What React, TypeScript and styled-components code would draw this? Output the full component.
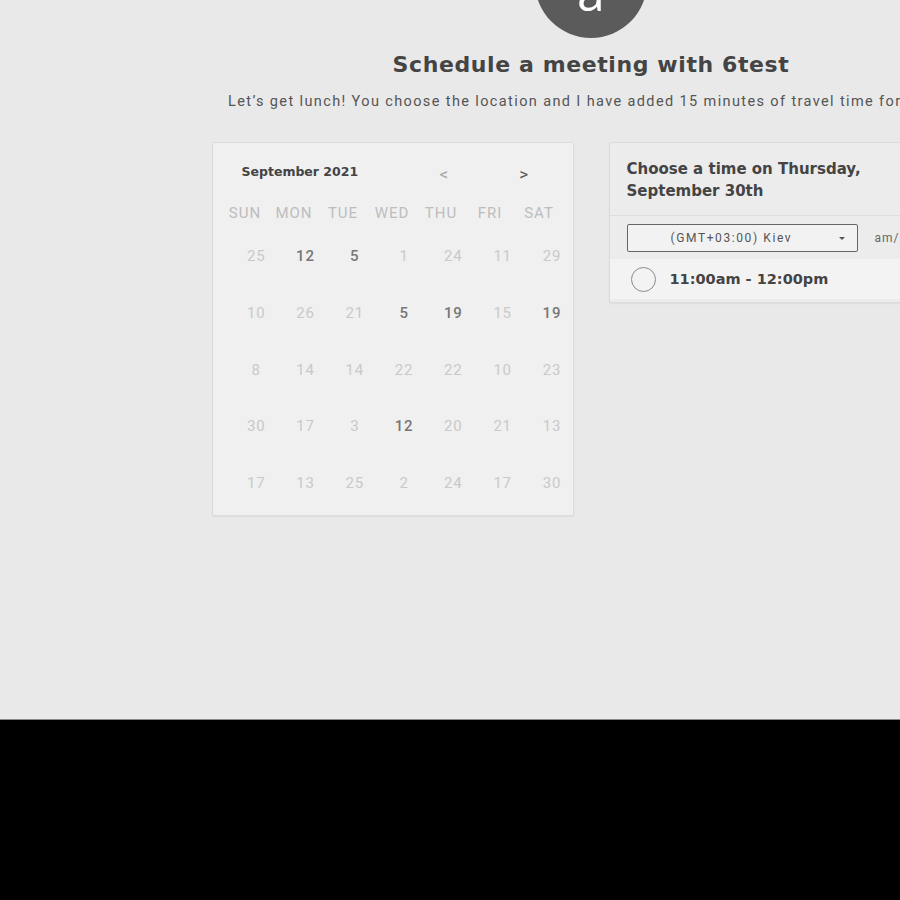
import React from "react";
import styled, { createGlobalStyle } from "styled-components";

const Global = createGlobalStyle`
  html, body { margin: 0; padding: 0; background: #000; overflow: hidden; }
  body { width: 900px; height: 900px; }
  #root { width: 900px; overflow: hidden; }
`;

const bold = `"DejaVu Sans", "Open Sans", sans-serif`;

const Page = styled.div`
  width: 1182px;
  height: 719px;
  background: #e9e9e9;
  border-bottom: 1px solid #8a8a8a;
  display: flex;
  flex-direction: column;
  align-items: center;
  font-family: Roboto, "Liberation Sans", sans-serif;
  overflow: hidden;
`;

const Avatar = styled.div`
  width: 112px;
  height: 112px;
  border-radius: 50%;
  background: #5b5b5b;
  margin-top: -74px;
  display: flex;
  align-items: flex-end;
  justify-content: center;
  color: #fff;
  font-size: 50px;
  line-height: 1;
  box-sizing: border-box;
  padding-bottom: 21px;
  font-family: "Open Sans", sans-serif;
`;

const Title = styled.h1`
  margin: 13px 0 0;
  font-family: ${bold};
  font-weight: 700;
  font-size: 22px;
  letter-spacing: 0.6px;
  line-height: 28px;
  color: #444;
`;

const Subtitle = styled.p`
  margin: 13px 0 0;
  font-size: 14.5px;
  line-height: 20px;
  color: #555;
  letter-spacing: 1.38px;
  white-space: nowrap;
`;

const Panels = styled.div`
  display: flex;
  gap: 35px;
  margin-top: 30px;
  align-items: flex-start;
`;

const Card = styled.div`
  width: 362px;
  box-sizing: border-box;
  background: #f0f0f0;
  border: 1px solid #dcdcdc;
  border-radius: 2px;
  box-shadow: 0 1px 2px rgba(0, 0, 0, 0.06);
  padding-bottom: 23px;
`;

const CalHeader = styled.div`
  display: flex;
  align-items: center;
  padding: 20px 0 0 29px;
  height: 16px;
`;

const Month = styled.div`
  flex: 0 0 198px;
  font-family: ${bold};
  font-weight: 700;
  font-size: 12.5px;
  color: #444;
`;

const NavGroup = styled.div`
  display: flex;
  gap: 71px;
  margin-top: 6px;
`;

const Nav = styled.span<{ $dark?: boolean }>`
  font-size: 17px;
  color: ${(p) => (p.$dark ? "#555" : "#aaa")};
`;

const DowGrid = styled.div`
  display: grid;
  grid-template-columns: repeat(7, 49px);
  padding-left: 8px;
  margin-top: 24px;
`;

const Dow = styled.div`
  text-align: center;
  font-size: 15px;
  letter-spacing: 1px;
  color: #bdbdbd;
  height: 20px;
  line-height: 20px;
`;

const DayGrid = styled.div`
  display: grid;
  grid-template-columns: repeat(7, 49.3px);
  row-gap: 38.8px;
  padding-left: 19px;
  margin-top: 24px;
`;

const Day = styled.div<{ $active?: boolean }>`
  text-align: center;
  font-size: 15px;
  letter-spacing: 0.8px;
  height: 18px;
  line-height: 18px;
  color: ${(p) => (p.$active ? "#777" : "#c9c9c9")};
  font-weight: ${(p) => (p.$active ? 500 : 400)};
`;

const TimePanel = styled.div`
  width: 362px;
  box-sizing: border-box;
  background: #ececec;
  border: 1px solid #dcdcdc;
  border-radius: 2px;
  box-shadow: 0 1px 2px rgba(0, 0, 0, 0.06);
  padding-bottom: 3px;
`;

const TimeHeader = styled.div`
  padding: 15px 17px 13px;
  border-bottom: 1px solid #dedede;
  font-family: ${bold};
  font-weight: 700;
  font-size: 15px;
  line-height: 22px;
  color: #444;
`;

const ZoneRow = styled.div`
  display: flex;
  align-items: center;
  padding: 8px 17px 7px;
  gap: 17px;
`;

const Select = styled.div`
  width: 231px;
  height: 28px;
  box-sizing: border-box;
  border: 1px solid #666;
  border-radius: 2px;
  background: #f2f2f2;
  display: flex;
  align-items: center;
  font-size: 12px;
  letter-spacing: 1.6px;
  color: #555;
  padding: 0 12px 0 43px;
`;

const SelectText = styled.span`
  flex: 1;
`;

const Caret = styled.span`
  width: 0;
  height: 0;
  border-left: 3px solid transparent;
  border-right: 3px solid transparent;
  border-top: 3px solid #555;
`;

const Format = styled.span`
  font-size: 12px;
  letter-spacing: 1px;
  color: #666;
`;

const Slot = styled.div`
  display: flex;
  align-items: center;
  gap: 14px;
  height: 40px;
  padding: 0 21px;
  background: #f3f3f3;
`;

const Radio = styled.span`
  width: 25px;
  height: 25px;
  box-sizing: border-box;
  border: 1.5px solid #8a8a8a;
  border-radius: 50%;
`;

const SlotText = styled.span`
  font-family: ${bold};
  font-weight: 700;
  font-size: 14.5px;
  color: #444;
`;

const days: [string, boolean][][] = [
  [["25", false], ["12", true], ["5", true], ["1", false], ["24", false], ["11", false], ["29", false]],
  [["10", false], ["26", false], ["21", false], ["5", true], ["19", true], ["15", false], ["19", true]],
  [["8", false], ["14", false], ["14", false], ["22", false], ["22", false], ["10", false], ["23", false]],
  [["30", false], ["17", false], ["3", false], ["12", true], ["20", false], ["21", false], ["13", false]],
  [["17", false], ["13", false], ["25", false], ["2", false], ["24", false], ["17", false], ["30", false]],
];

const dows = ["SUN", "MON", "TUE", "WED", "THU", "FRI", "SAT"];

export default function App() {
  return (
    <>
      <Global />
      <Page>
        <Avatar>a</Avatar>
        <Title>Schedule a meeting with 6test</Title>
        <Subtitle>
          Let’s get lunch! You choose the location and I have added 15 minutes of travel time for us all!
        </Subtitle>
        <Panels>
          <Card>
            <CalHeader>
              <Month>September 2021</Month>
              <NavGroup>
                <Nav>&lt;</Nav>
                <Nav $dark>&gt;</Nav>
              </NavGroup>
            </CalHeader>
            <DowGrid>
              {dows.map((d) => (
                <Dow key={d}>{d}</Dow>
              ))}
            </DowGrid>
            <DayGrid>
              {days.flat().map(([n, a], i) => (
                <Day key={i} $active={a}>
                  {n}
                </Day>
              ))}
            </DayGrid>
          </Card>
          <TimePanel>
            <TimeHeader>
              Choose a time on Thursday,
              <br />
              September 30th
            </TimeHeader>
            <ZoneRow>
              <Select>
                <SelectText>(GMT+03:00) Kiev</SelectText>
                <Caret />
              </Select>
              <Format>am/pm</Format>
            </ZoneRow>
            <Slot>
              <Radio />
              <SlotText>11:00am - 12:00pm</SlotText>
            </Slot>
          </TimePanel>
        </Panels>
      </Page>
    </>
  );
}
